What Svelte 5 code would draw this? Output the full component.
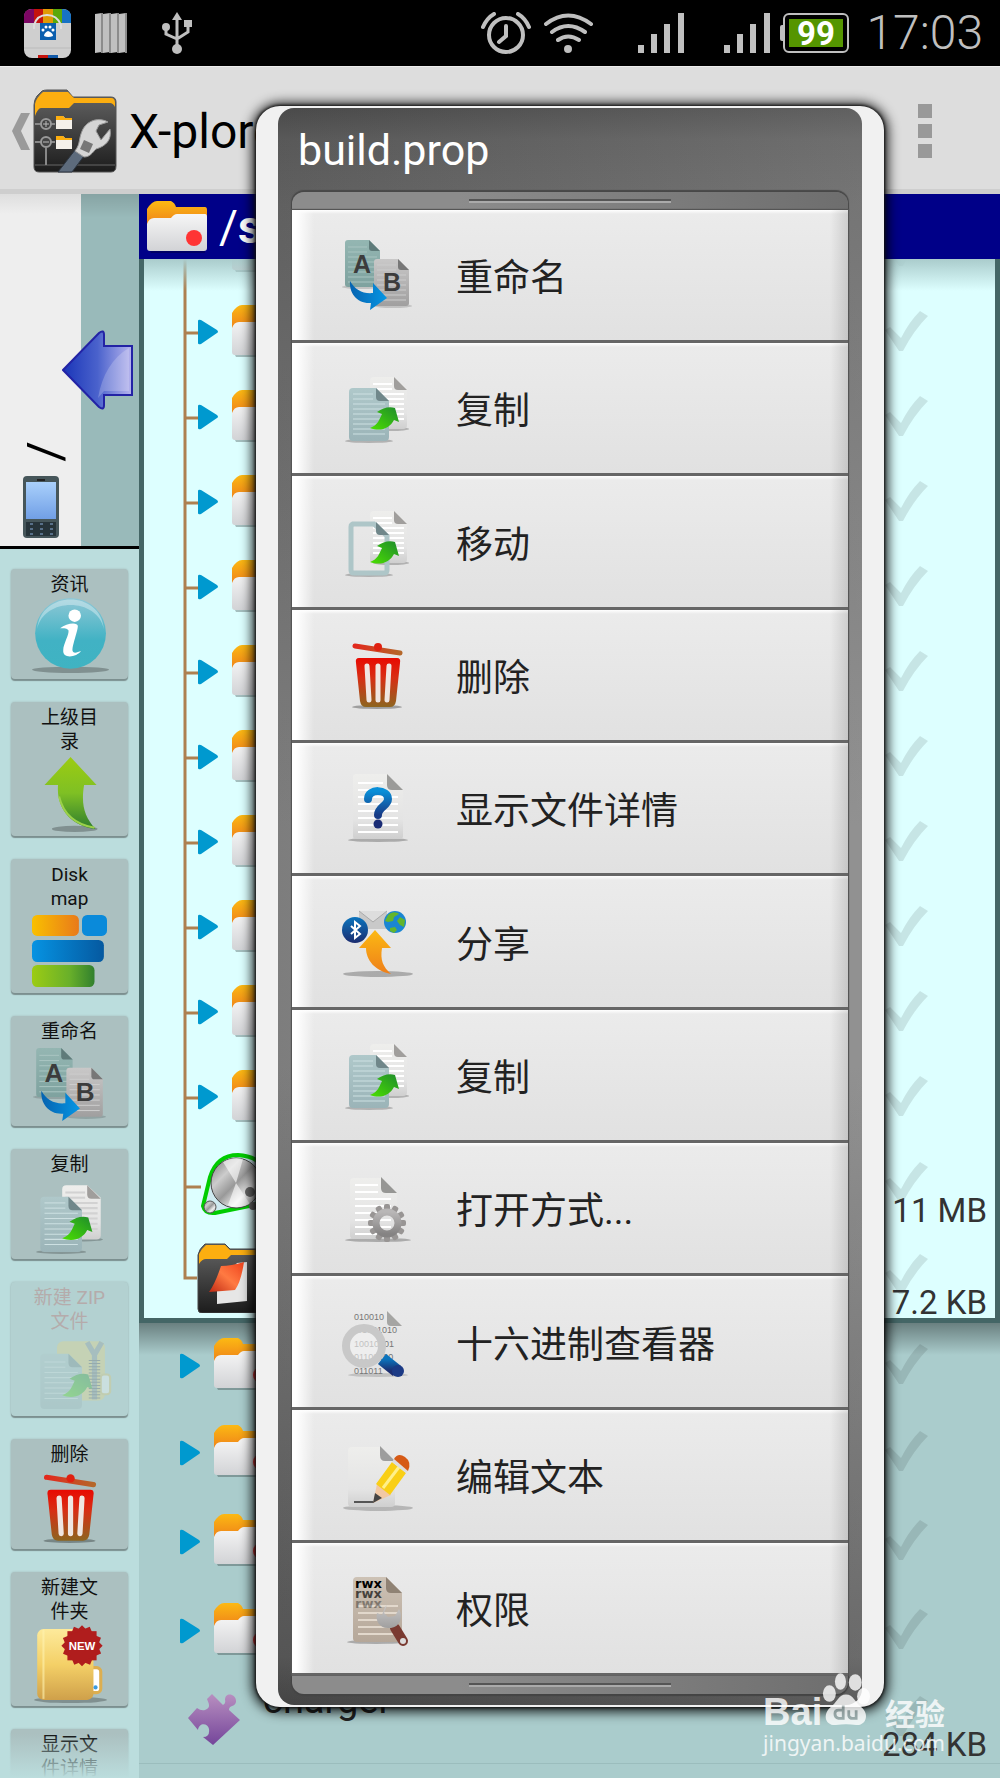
<script lang="ts">
	type Tool = { label: string; icon: string; disabled?: boolean };

	const tools: Tool[] = [
		{ label: '资讯', icon: 'info' },
		{ label: '上级目录', icon: 'up' },
		{ label: 'Disk map', icon: 'diskmap' },
		{ label: '重命名', icon: 'rename' },
		{ label: '复制', icon: 'copyTool' },
		{ label: '新建 ZIP 文件', icon: 'zip', disabled: true },
		{ label: '删除', icon: 'trash' },
		{ label: '新建文件夹', icon: 'newFolder' },
		{ label: '显示文件详情', icon: 'details' }
	];

	const menu = [
		{ label: '重命名', icon: 'rename' },
		{ label: '复制', icon: 'copy' },
		{ label: '移动', icon: 'move' },
		{ label: '删除', icon: 'trash' },
		{ label: '显示文件详情', icon: 'details' },
		{ label: '分享', icon: 'share' },
		{ label: '复制', icon: 'copy' },
		{ label: '打开方式...', icon: 'openWith' },
		{ label: '十六进制查看器', icon: 'hex' },
		{ label: '编辑文本', icon: 'edit' },
		{ label: '权限', icon: 'rights' }
	];

	const folders = Array.from({ length: 11 }, (_, i) => i);
	const otherFolders = [0, 1, 2, 3];
	const docLines = [0, 1, 2, 3, 4, 5, 6, 7];
	const teeth = Array.from({ length: 12 }, (_, i) => i * 30);

	let selected = $state('');
</script>

{#snippet icon(name: string)}
	<svg class="icon" viewBox="0 0 72 72" aria-hidden="true">
		{#if name === 'rename'}
			<ellipse cx="20" cy="48" rx="19" ry="2" fill="#000" opacity=".15" />
			<path d="M7 1h21l11 11v33q0 3-3 3H7q-3 0-3-3V4q0-3 3-3z" fill="url(#teal)" />
			{#each docLines as n}
				<path d="M7 {8 + n * 5}h{n < 2 ? 19 : 29}" stroke="#a8c4c1" />
			{/each}
			<path d="M28 1l11 11h-8q-3 0-3-3z" fill="#5f7b7a" />
			<text x="12" y="34" class="letter">A</text>
			<ellipse cx="52" cy="67" rx="19" ry="2" fill="#000" opacity=".15" />
			<path d="M36 20h21l11 11v33q0 3-3 3H36q-3 0-3-3V23q0-3 3-3z" fill="url(#silver)" />
			{#each docLines as n}
				<path d="M36 {26 + n * 5}h{n < 2 ? 19 : 29}" stroke="#ccc" />
			{/each}
			<path d="M57 20l11 11h-8q-3 0-3-3z" fill="#777" />
			<text x="42" y="52" class="letter">B</text>
			<path d="M9 42c5 9 13 13 23 12v-10l14 15-17 12 1-7C16 65 8 54 9 42z" fill="url(#blueH)" />
		{:else if name === 'copy' || name === 'move' || name === 'copyTool'}
			<ellipse cx="50" cy="57" rx="18" ry="2" fill="#000" opacity=".22" />
			<path d="M33 5h20l13 12v36q0 4-4 4H33q-4 0-4-4V9q0-4 4-4z" fill="url(#paper)" />
			{#each docLines as n}
				<path d="M32 {12 + n * 5}h{n < 2 ? 19 : 31}" stroke={name === 'copyTool' ? '#d2d2d2' : '#fff'} stroke-width="2" />
			{/each}
			<path d="M53 5l13 13h-9q-4 0-4-4z" fill="#a09e9c" />
			<ellipse cx="28" cy="69" rx="24" ry="2" fill="#000" opacity=".22" />
			{#if name === 'move'}
				<path d="M11 18h22l13 12v34q0 3-3 3H13q-3 0-3-3V21q0-3 3-3z" fill="none" stroke="#aec6c8" stroke-width="5" />
			{:else}
				<path d="M12 16h23l13 13v36q0 4-4 4H12q-4 0-4-4V20q0-4 4-4z" fill="url(#pale)" />
				{#each [0, 1, 2, 3, 4, 5, 6, 7, 8] as n}
					<path d="M12 {22 + n * 5}h{n < 2 ? 20 : 32}" stroke="#cde0e2" stroke-width="1" />
				{/each}
			{/if}
			<path d="M35 16l13 13h-9q-4 0-4-4z" fill="#70878a" />
			<path d="M29 56c8-3 9-8 12-14l-5-2c6-4 12-6 18-4l4 14-5-2c-4 8-13 12-24 8z" fill="url(#green)" />
		{:else if name === 'trash'}
			<ellipse cx="36" cy="68" rx="25" ry="2" fill="#000" opacity=".3" />
			<path d="M14 7l45 7" stroke="url(#rust)" stroke-width="5" stroke-linecap="round" />
			<circle cx="37" cy="8" r="4" fill="#e02010" />
			<path d="M18 19h38q4 0 3 5l-4 38q-1 6-6 6H25q-5 0-6-6l-4-38q-1-5 3-5z" fill="url(#red)" />
			<path d="M26 27l2 34M37 27v34M48 27l-2 34" stroke="#efe6e2" stroke-width="5" stroke-linecap="round" />
		{:else if name === 'details'}
			<ellipse cx="37" cy="68" rx="30" ry="2" fill="#000" opacity=".25" />
			<path d="M15 2h31l16 16v46q0 3-3 3H15q-3 0-3-3V5q0-3 3-3z" fill="url(#paper)" />
			{#each docLines as n}
				<path d="M17 {11 + n * 7}h{n < 2 ? 25 : 40}" stroke="#fff" stroke-width="2" />
			{/each}
			<path d="M46 2l16 16H51q-5 0-5-5z" fill="#9b9b99" />
			<path d="M27 27c0-11 20-10 20 0 0 7-10 8-10 16" fill="none" stroke="url(#question)" stroke-width="8" stroke-linecap="round" />
			<circle cx="37" cy="52" r="4.500" fill="#1a2c75" />
		{:else if name === 'share'}
			<ellipse cx="37" cy="68" rx="35" ry="3" fill="#000" opacity=".25" />
			<path d="M18 5h28v18H18z" fill="#c9c9c9" />
			<path d="M18 5l14 11L46 5" fill="#ddd" stroke="#aaa" />
			<circle cx="14" cy="24" r="13" fill="url(#navyV)" />
			<path d="M10 20l9 8-5 4V16l5 4-9 8" fill="none" stroke="#fff" stroke-width="2" />
			<circle cx="54" cy="16" r="11" fill="#1a86d2" />
			<path d="M47 9c4-4 9-3 11-1l-5 3-1 4-5 1-3-1zM59 11l5 3-1 7-4-2-3-4zM49 22l5-1 2 3-3 3-4-2z" fill="#63b52c" />
			<path d="M34 24l16 18h-9c-2 12 1 19 9 26-16-3-25-14-25-26h-7z" fill="url(#orangeV)" />
		{:else if name === 'openWith'}
			<ellipse cx="37" cy="68" rx="33" ry="2" fill="#000" opacity=".25" />
			<path d="M13 6h28l15 15v46H13q-4 0-4-4V10q0-4 4-4z" fill="url(#paper)" />
			{#each docLines as n}
				<path d="M14 {13 + n * 7}h{n < 2 ? 23 : 36}" stroke="#fff" stroke-width="2" />
			{/each}
			<path d="M40 5l16 16H45q-5 0-5-5z" fill="#969694" />
			{#each teeth as a}
				<rect x="43" y="32" width="6" height="9" rx="2" fill="#989594" transform="rotate({a} 46 51)" />
			{/each}
			<circle cx="46" cy="51" r="11" fill="none" stroke="url(#grey)" stroke-width="7" />
		{:else if name === 'hex'}
			<ellipse cx="37" cy="69" rx="30" ry="2" fill="#000" opacity=".15" />
			<path d="M46 5l15 15H50q-4 0-4-4z" fill="#a5a5a3" />
			<text x="13" y="14" class="bits">010010</text>
			<text x="16" y="27" class="bits">01001010</text>
			<text x="13" y="41" class="bits">10010101</text>
			<text x="13" y="54" class="bits">01100100</text>
			<text x="13" y="68" class="bits">011011</text>
			<circle cx="23" cy="40" r="18" fill="#f4f4f4" fill-opacity=".6" stroke="#c8c8c8" stroke-width="8" />
			<path d="M41 53l15 12" stroke="url(#navyV)" stroke-width="13" />
			<circle cx="57" cy="65" r="6" fill="#1c3a85" />
		{:else if name === 'edit'}
			<ellipse cx="37" cy="69" rx="35" ry="3" fill="#000" opacity=".2" />
			<path d="M11 8h28l15 14v42q0 4-4 4H11q-4 0-4-4V12q0-4 4-4z" fill="url(#paper)" />
			<path d="M39 7l15 15H44q-5 0-5-6z" fill="#9d9d9d" />
			<path d="M13 63h20" stroke="#555" stroke-width="2" />
			<path d="M32 64l4-19 14 11z" fill="#f2c8a4" />
			<path d="M32 64l2-10 7 5z" fill="#444" />
			<path d="M35 45l16-22 14 11-16 22z" fill="#f9cf16" />
			<path d="M42 49l16-21" stroke="#fff08a" stroke-width="3" />
			<path d="M51 23l14 11 2-2-14-12z" fill="#ddd" />
			<path d="M53 20q4-7 11-2t3 14z" fill="#d65a16" />
		{:else if name === 'rights'}
			<ellipse cx="35" cy="70" rx="29" ry="2" fill="#000" opacity=".25" />
			<path d="M16 5h29l16 16v46q0 3-3 3H16q-4 0-4-4V9q0-4 4-4z" fill="url(#brown)" />
			<path d="M17 34h40M17 41h40M17 48h40M17 55h40M17 62h40" stroke="#e2d8cc" stroke-width="2" />
			<path d="M45 5l16 16H50q-5 0-5-5z" fill="#8f8274" />
			<text x="14" y="16" class="rwx">rwx</text>
			<text x="14" y="26" class="rwx" opacity=".65">rwx</text>
			<text x="14" y="36" class="rwx" opacity=".35">rwx</text>
			<path d="M54 56l8 13" stroke="#7a3a31" stroke-width="10" stroke-linecap="round" />
			<circle cx="62" cy="69" r="3" fill="#ddd" />
			<path d="M46 33l-3 8 4 4 7-1 4-7c5 9 0 20-11 19-9 0-13-8-11-15l5 2 3-8z" fill="url(#silver)" />
		{:else if name === 'info'}
			<ellipse cx="37" cy="67" rx="37" ry="3" fill="#000" opacity=".25" />
			<circle cx="37" cy="32" r="34" fill="url(#aqua)" />
			<path d="M5 28C8-10 66-10 69 28 63-3 11-3 5 28z" fill="#fff" opacity=".35" />
			<circle cx="41" cy="15" r="6" fill="#fff" />
			<path d="M27 27c6-5 17-6 17-2 0 5-6 20-5 24 1 3 5 1 8 0-4 6-18 8-17-1 0-6 6-15 5-19-1-2-4-2-8-2z" fill="#fff" />
		{:else if name === 'up'}
			<ellipse cx="41" cy="69" rx="22" ry="3" fill="#000" opacity=".25" />
			<path d="M37 0l25 27H50c-3 18 0 30 11 42C38 67 23 49 25 27H12z" fill="url(#lime)" />
			<path d="M26 38c4 17 16 27 34 30" fill="none" stroke="#9bd14a" stroke-width="2" />
		{:else if name === 'diskmap'}
			<rect x="0" y="1" width="45" height="20" rx="5" fill="url(#orangeH)" />
			<rect x="48" y="1" width="24" height="20" rx="5" fill="#0a8ada" />
			<rect x="0" y="25" width="69" height="21" rx="5" fill="url(#blueH2)" />
			<rect x="0" y="49" width="60" height="21" rx="5" fill="url(#greenH)" />
		{:else if name === 'zip'}
			<rect x="24" y="4" width="46" height="57" rx="6" fill="#efd777" />
			<rect x="66" y="36" width="9" height="19" rx="3" fill="#fff" stroke="#e2c468" stroke-width="2" />
			<path d="M53 5l7 12 7-12M60 17v43" fill="none" stroke="#8b9498" stroke-width="5" />
			<path d="M60 22v38" stroke="#555" stroke-width="11" stroke-dasharray="1 2" />
			<path d="M12 16h23l13 13v36q0 4-4 4H12q-4 0-4-4V20q0-4 4-4z" fill="url(#pale)" />
			{#each docLines as n}
				<path d="M12 {24 + n * 5}h{n < 2 ? 20 : 32}" stroke="#d7e6e7" />
			{/each}
			<path d="M35 16l13 13h-9q-4 0-4-4z" fill="#70878a" />
			<path d="M29 56c8-3 9-8 12-14l-5-2c6-4 12-6 18-4l4 14-5-2c-4 8-13 12-24 8z" fill="url(#green)" />
		{:else if name === 'newFolder'}
			<ellipse cx="37" cy="70" rx="35" ry="3" fill="#000" opacity=".25" />
			<rect x="55" y="39" width="11" height="24" rx="4" fill="#fff" stroke="#dcae50" stroke-width="3" />
			<rect x="5" y="2" width="54" height="68" rx="6" fill="url(#sand)" />
			<path d="M11 3v66" stroke="#fff3b0" stroke-width="2" opacity=".6" />
			<g fill="#b01d1d">
				{#each [0, 22, 45, 67] as a}
					<rect x="34" y="4" width="28" height="28" transform="rotate({a} 48 18)" />
				{/each}
			</g>
			<text x="48" y="22" text-anchor="middle" class="new">NEW</text>
			<circle cx="61" cy="58" r="2" fill="#3b9be0" />
		{/if}
	</svg>
{/snippet}

{#snippet folder(dot: boolean)}
	<svg class="folder" viewBox="0 0 60 52" aria-hidden="true">
		<path d="M2 48h56v4H4z" fill="#000" opacity=".25" />
		<path d="M0 22V8q5-8 10-8h14q4 2 5 6h29q2 0 2 3v16H0z" fill="url(#orangeV)" />
		<path d="M0 23q2-6 7-6h17q3-4 6-4h28q2 0 2 3v31q0 3-3 3H3q-3 0-3-3z" fill="url(#white)" />
		{#if dot}
			<circle cx="47" cy="37" r="8" fill="#ff3434" />
		{/if}
	</svg>
{/snippet}

{#snippet check()}
	<svg class="check" width="44" height="42" viewBox="0 0 44 42" aria-hidden="true">
		<path d="M0 20L5 17 16 28Q24 12 35 1L43 6Q29 20 18 41L14 41Z" fill="#000" opacity=".1" />
	</svg>
{/snippet}

{#snippet signal()}
	<svg width="76" height="40" viewBox="0 0 76 40" fill="#bfbfbf" aria-hidden="true">
		<path d="M30 32h6v8h-6zM43 21h6v19h-6zM56 11h6v29h-6zM70 0h6v40h-6z" />
	</svg>
{/snippet}

<svg class="defs" width="0" height="0" aria-hidden="true">
	<defs>
		<linearGradient id="teal" x2="0" y2="1"><stop stop-color="#94b6b2" /><stop offset="1" stop-color="#7ea29f" /></linearGradient>
		<linearGradient id="grey" x2="0" y2="1"><stop stop-color="#b9b7b7" /><stop offset="1" stop-color="#858383" /></linearGradient>
		<linearGradient id="silver" x2="0" y2="1"><stop stop-color="#c9c8c8" /><stop offset="1" stop-color="#a09f9f" /></linearGradient>
		<linearGradient id="paper" x2="0" y2="1"><stop stop-color="#eeeeec" /><stop offset=".7" stop-color="#e4e4e4" /><stop offset="1" stop-color="#cfcfcf" /></linearGradient>
		<linearGradient id="pale" x2="0" y2="1"><stop stop-color="#afc8ca" /><stop offset="1" stop-color="#9bb4b8" /></linearGradient>
		<linearGradient id="brown" x2="0" y2="1"><stop stop-color="#cdc2b5" /><stop offset="1" stop-color="#b5a799" /></linearGradient>
		<linearGradient id="green" x1="1" x2="0" y2="1"><stop stop-color="#1e8b2c" /><stop offset="1" stop-color="#4be000" /></linearGradient>
		<linearGradient id="lime" x2="0" y2="1"><stop stop-color="#9ccc12" /><stop offset=".5" stop-color="#7fc024" /><stop offset="1" stop-color="#2e7d2e" /></linearGradient>
		<linearGradient id="red" x2="0" y2="1"><stop stop-color="#e80a02" /><stop offset=".4" stop-color="#d82e14" /><stop offset="1" stop-color="#8d651f" /></linearGradient>
		<linearGradient id="rust"><stop stop-color="#e2281c" /><stop offset="1" stop-color="#b5672a" /></linearGradient>
		<linearGradient id="question" x2="0" y2="1"><stop stop-color="#0a8fd8" /><stop offset="1" stop-color="#173a86" /></linearGradient>
		<linearGradient id="navyV" x2="0" y2="1"><stop stop-color="#0b74bd" /><stop offset="1" stop-color="#1c2d70" /></linearGradient>
		<linearGradient id="blueH"><stop stop-color="#0663b0" /><stop offset="1" stop-color="#0696e4" /></linearGradient>
		<linearGradient id="blueH2"><stop stop-color="#0693e2" /><stop offset="1" stop-color="#0559a0" /></linearGradient>
		<linearGradient id="orangeH"><stop stop-color="#f9c000" /><stop offset="1" stop-color="#e97a1a" /></linearGradient>
		<linearGradient id="greenH"><stop stop-color="#9ccc14" /><stop offset=".6" stop-color="#69b02a" /><stop offset="1" stop-color="#31802e" /></linearGradient>
		<linearGradient id="orangeV" x2="0" y2="1"><stop stop-color="#fcb913" /><stop offset="1" stop-color="#ee7f1a" /></linearGradient>
		<linearGradient id="white" x2="0" y2="1"><stop stop-color="#f6f6f6" /><stop offset="1" stop-color="#d2d3d6" /></linearGradient>
		<linearGradient id="aqua" x2="0" y2="1"><stop stop-color="#90c8d6" /><stop offset=".6" stop-color="#41b2c4" /><stop offset="1" stop-color="#3fb3c2" /></linearGradient>
		<linearGradient id="sand" x2="0" y2="1"><stop stop-color="#fdea9b" /><stop offset=".5" stop-color="#f4d067" /><stop offset="1" stop-color="#cfa04a" /></linearGradient>
		<linearGradient id="dark" x2="0" y2="1"><stop stop-color="#666" /><stop offset="1" stop-color="#1c1c1c" /></linearGradient>
		<linearGradient id="arrow"><stop stop-color="#1a35b8" /><stop offset=".5" stop-color="#4a62cc" /><stop offset="1" stop-color="#b7b5ee" /></linearGradient>
		<linearGradient id="purple" x2="0" y2="1"><stop stop-color="#b88fc0" /><stop offset="1" stop-color="#74459a" /></linearGradient>
		<linearGradient id="metal" x2="1" y2="1"><stop stop-color="#777" /><stop offset=".3" stop-color="#ccc" /><stop offset=".5" stop-color="#999" /><stop offset=".7" stop-color="#eee" /><stop offset="1" stop-color="#777" /></linearGradient>
		<linearGradient id="page" x1="1" x2="0" y2="1"><stop stop-color="#f0421c" /><stop offset=".5" stop-color="#ff7a42" /><stop offset="1" stop-color="#c02a14" /></linearGradient>
		<linearGradient id="screen" x2="0" y2="1"><stop stop-color="#a9d0fb" /><stop offset="1" stop-color="#719fe6" /></linearGradient>
	</defs>
</svg>

<div class="app">
	<div class="status">
		<div class="group left">
			<svg width="47" height="49" viewBox="0 0 47 49" aria-label="Baidu">
				<rect width="47" height="49" rx="8" fill="#cfcfcf" />
				<path d="M8 0h3v14H0V8q0-8 8-8z" fill="#7c0663" />
				<path d="M10 0h9v14h-9z" fill="#c4130d" />
				<path d="M19 0h10v14H19z" fill="#e19a05" />
				<path d="M29 0h9v14h-9z" fill="#5aa80a" />
				<path d="M38 0q9 0 9 8v6h-9z" fill="#1772c4" />
				<path d="M10 20v-4q3-10 13-10t14 10v4" fill="none" stroke="#ddd" stroke-width="2" />
				<rect x="16" y="14" width="16" height="17" fill="#0c5fae" />
				<path d="M20 27q0-3 4-5 5 2 5 5-5 2-9 0z" fill="#fff" />
				<circle cx="19" cy="21" r="1.500" fill="#fff" /><circle cx="22" cy="18" r="1.500" fill="#fff" />
				<circle cx="26" cy="18" r="1.500" fill="#fff" /><circle cx="29" cy="21" r="1.500" fill="#fff" />
				<path d="M0 39h47" stroke="#bbb" />
				<path d="M14 46h10v3H14z" fill="#c4130d" /><path d="M24 46h10v3H24z" fill="#1159a8" />
			</svg>
			<svg width="33" height="40" viewBox="0 0 33 40" aria-hidden="true">
				<path d="M0 1l7-1v39l-7 1zM8 1l7-1v39l-7 1zM16 1l7-1v39l-7 1zM24 1l7-1v39l-7 1z" fill="#c0c0c0" />
				<path d="M7 0v40M15 0v40M23 0v40M31 0v40" stroke="#8c8c8c" stroke-width="2" />
			</svg>
			<svg width="52" height="42" viewBox="0 0 52 42" fill="#bfbfbf" aria-hidden="true">
				<path d="M25 0l5 8h-10zM32 8h8v7h-8z" /><circle cx="14" cy="15" r="4" /><circle cx="25" cy="37" r="5" />
				<path d="M25 6v30M14 16v6l11 5M36 14v6l-11 7" fill="none" stroke="#bfbfbf" stroke-width="3" />
			</svg>
		</div>
		<div class="group right">
			<svg width="53" height="42" viewBox="0 0 53 42" fill="none" stroke="#bfbfbf" stroke-width="4" stroke-linecap="round" aria-hidden="true">
				<circle cx="25" cy="23" r="17" /><path d="M25 14v10l-7 6M2 15Q6 6 13 2M48 15Q44 6 37 2" />
			</svg>
			<svg width="54" height="40" viewBox="0 0 54 40" fill="none" stroke="#bfbfbf" stroke-width="4" stroke-linecap="round" aria-hidden="true">
				<path d="M2 11q22-17 45 0M8 19q16-12 33 0M14 27q10-7 21 0" /><circle cx="24" cy="36" r="2" />
			</svg>
			{@render signal()}
			{@render signal()}
			<div class="battery"><span>99</span></div>
			<time>17:03</time>
		</div>
	</div>

	<header>
		<button class="home" aria-label="Back">
			<svg width="19" height="37" viewBox="0 0 19 37"><path d="M9 0h9L9 18l9 19H9L0 18z" fill="#9a9a9a" /></svg>
			<svg width="84" height="84" viewBox="0 0 84 84">
				<path d="M1 16q0-5 3-9l5-5q2-1 5-1h20l6 7h38q5 0 5 5v64q0 6-5 6H6q-5 0-5-5z" fill="url(#dark)" stroke="#555" />
				<path d="M2 27V15q1-6 8-12h25l6 6h37q4 0 4 5v4q-2-4-5-4H41l-5 5H8q-3 0-6 8z" fill="#fcae10" />
				<path d="M2 76h80" stroke="#666" />
				<path d="M2 35h20M2 53h20M13 59v17" stroke="#888" stroke-width="2" />
				<circle cx="13" cy="35" r="5" fill="#444" stroke="#999" stroke-width="2" /><circle cx="13" cy="53" r="5" fill="#444" stroke="#999" stroke-width="2" />
				<path d="M10 35h6M13 32v6M10 53h6" stroke="#bbb" />
				<path d="M23 27h7l2 2h7v11H23zM23 47h7l2 2h7v11H23z" fill="#f5f1ea" />
				<path d="M23 27h7l2 2h7v2H23zM23 47h7l2 2h7v2H23z" fill="#fcae10" />
				<path d="M25 83l17-22 9 6-12 16z" fill="#5d6b7c" stroke="#2c3540" />
				<path d="M42 62c6-8 3-12 8-22 5-9 16-12 25-7l-9 3-3 6 5 9 9-11c2 11-4 17-14 20-4 4-6 8-12 8z" fill="#d5d5d5" stroke="#999" />
				<path d="M51 51l9 4-4 9-9-4z" fill="#777" />
			</svg>
			<span class="title">X-plore</span>
		</button>
		<button class="overflow" aria-label="More options"><i></i><i></i><i></i></button>
	</header>

	<main>
		<aside>
			<div class="tabs">
				<div class="tab">
					<span class="root">/</span>
					<svg width="36" height="62" viewBox="0 0 36 62" aria-hidden="true">
						<rect width="36" height="62" rx="4" fill="#46565a" />
						<rect x="3" y="6" width="30" height="37" fill="url(#screen)" />
						<path d="M14 4h8" stroke="#222" stroke-width="2" />
						<path d="M3 46h30v14H3z" fill="#27343a" />
						<path d="M7 48h3M17 48h3M27 48h3M7 53h3M17 53h3M27 53h3M7 58h3M17 58h3M27 58h3" stroke="#587089" stroke-width="2" />
					</svg>
				</div>
				<button class="switch" aria-label="Switch pane">
					<svg width="71" height="80" viewBox="0 0 71 80">
						<path d="M1 40L37 3q5-4 5 2v11h28v49H42v10q0 6-5 2z" fill="url(#arrow)" stroke="#2323a5" stroke-width="2" />
						<path d="M67 18v43H42l-6 7C40 45 50 28 67 18z" fill="#fff" opacity=".2" />
					</svg>
				</button>
			</div>
			<nav>
				{#each tools as tool}
					<button class="tool" disabled={tool.disabled}>
						<span>{tool.label}</span>
						{@render icon(tool.icon)}
					</button>
				{/each}
			</nav>
		</aside>

		<section>
			<div class="path">{@render folder(true)}<span>/<b>system</b></span></div>
			<ul class="tree">
				{#each folders as n (n)}
					<li>
						<svg class="branch" width="74" height="85" viewBox="0 0 74 85" aria-hidden="true">
							<path d="M41 0v85M41 43h14" stroke="#ad8050" stroke-width="3" fill="none" />
							<path d="M54 31q0-2 3-1l16 10q2 2 0 3L57 54q-3 1-3-1z" fill="#0099cf" />
						</svg>
						{@render folder(false)}
						{@render check()}
					</li>
				{/each}
				<li class="big">
					<svg class="branch" width="57" height="92" viewBox="0 0 57 92" aria-hidden="true">
						<path d="M41 0v92M41 47h18" stroke="#ad8050" stroke-width="3" fill="none" />
					</svg>
					<svg class="pic" width="70" height="66" viewBox="0 0 70 66" aria-hidden="true">
						<path d="M2 53L9 24Q16 2 37 2q30 2 30 30-2 16-14 20L14 60q-10 1-12-7z" fill="#bcd" fill-opacity=".4" stroke="#0c0" stroke-width="4" />
						<circle cx="35" cy="30" r="25" fill="url(#metal)" stroke="#444" />
						<path d="M35 30L22 9q10-6 20-3zM35 30l14 21q-12 6-22 1z" fill="#fff" opacity=".6" />
						<circle cx="9" cy="54" r="6" fill="url(#metal)" stroke="#555" />
						<circle cx="49" cy="39" r="5" fill="#666" />
						<circle cx="52" cy="53" r="4" fill="#666" />
					</svg>
					<div class="meta">{@render check()}<span>11 MB</span></div>
				</li>
				<li class="big">
					<svg class="branch" width="53" height="92" viewBox="0 0 53 92" aria-hidden="true">
						<path d="M41 0v46h18" stroke="#ad8050" stroke-width="3" fill="none" />
					</svg>
					<svg class="pic" width="70" height="70" viewBox="0 0 70 70" aria-hidden="true">
						<path d="M1 12q1-6 7-11h20l5 5h37v64H5q-4 0-4-4z" fill="url(#dark)" stroke="#444" />
						<path d="M2 21V11q2-5 7-9h19l5 5h37v5H34l-4 4H9q-4 0-7 5z" fill="#fcae10" />
						<path d="M20 45l20-25 10-1v39l-30 3z" fill="#e6e6e6" />
						<path d="M12 49q6-8 12-26 10 0 23-4-3 20-9 28-12 1-26 2z" fill="url(#page)" />
					</svg>
					<div class="meta">{@render check()}<span>7.2 KB</span></div>
				</li>
			</ul>
			<ul class="rest">
				{#each otherFolders as n (n)}
					<li>
						<svg width="20" height="26" viewBox="0 0 20 26" aria-hidden="true">
							<path d="M0 2q0-2 3-1l16 10q2 2 0 3L3 25q-3 1-3-1z" fill="#0099cf" />
						</svg>
						{@render folder(true)}
						{@render check()}
					</li>
				{/each}
				<li class="file">
					<svg class="pic" width="61" height="52" viewBox="0 0 61 52" aria-hidden="true">
						<path d="M24 1l11 11q3-2 2-5c0-9 12-6 11 2-1 5-7 3-7 8l11 10-27 25-10-8q7 0 6-8c-1-6-10-7-11 1L0 25l9-10q4 3 8 2c7-2 3-8 2-11z" fill="url(#purple)" />
					</svg>
					<span class="name">charger</span>
					<div class="meta">{@render check()}<span>284 KB</span></div>
				</li>
			</ul>
		</section>
	</main>

	<div class="dialog" role="dialog" aria-label="build.prop">
		<div class="frame">
			<h1>build.prop</h1>
			<div class="strip top"></div>
			<div class="menu">
				{#each menu as item}
					<button onclick={() => (selected = item.label)}>
						{@render icon(item.icon)}
						<span>{item.label}</span>
					</button>
				{/each}
			</div>
			<div class="strip bottom"></div>
		</div>
	</div>

	<div class="watermark">
		<div class="brand">
			<b>Bai</b>
			<svg width="48" height="58" viewBox="0 0 52 58" aria-label="du">
				<g fill="#fff">
					<ellipse cx="8" cy="22" rx="7" ry="9" /><ellipse cx="20" cy="9" rx="6" ry="9" />
					<ellipse cx="36" cy="10" rx="7" ry="9" /><ellipse cx="45" cy="25" rx="7" ry="9" />
					<path d="M26 23c8 0 10 9 17 14 9 8 4 20-6 19-8-1-14-1-22 0C4 57 0 45 9 37c7-5 9-14 17-14z" />
				</g>
				<path d="M23 35v14h-5q-4-1-4-5t4-4h5M29 40v6q1 3 4 3h4v-9" fill="none" stroke="#98a6a6" stroke-width="3" />
			</svg>
			<b class="cn">经验</b>
		</div>
		<span>jingyan.baidu.com</span>
	</div>
</div>

<style>
	:global(body) {
		margin: 0;
	}

	.app {
		position: relative;
		display: flex;
		flex-direction: column;
		height: 100vh;
		overflow: hidden;
		background: #aacccc;
		font-family: Roboto, "Noto Sans CJK SC", sans-serif;
		color: #222;
	}

	.defs {
		position: absolute;
	}

	svg {
		display: block;
		flex: none;
	}

	button {
		font-family: inherit;
		color: inherit;
		border: 0;
		padding: 0;
		margin: 0;
		background: none;
		cursor: pointer;
	}

	ul {
		list-style: none;
		margin: 0;
		padding: 0;
	}

	.status {
		display: flex;
		flex: none;
		justify-content: space-between;
		height: 66px;
		padding: 0 17px 0 24px;
		background: #000;
	}

	.group {
		display: flex;
		align-items: center;
	}

	.left {
		gap: 24px;
	}

	.right {
		gap: 10px;
	}

	.battery {
		position: relative;
		box-sizing: border-box;
		width: 66px;
		height: 40px;
		margin-left: 3px;
		padding: 4px;
		border: 2px solid #bfbfbf;
		border-radius: 6px;
	}

	.battery::before {
		content: "";
		position: absolute;
		left: -5px;
		top: 10px;
		width: 4px;
		height: 16px;
		background: #bfbfbf;
		border-radius: 2px 0 0 2px;
	}

	.battery span {
		display: block;
		height: 28px;
		background: #559500;
		color: #fff;
		font: bold 33px/30px Roboto, sans-serif;
		text-align: center;
	}

	time {
		min-width: 124px;
		color: #bfbfbf;
		font-size: 48px;
		font-weight: 300;
		line-height: 68px;
		text-align: right;
	}

	header {
		display: flex;
		flex: none;
		justify-content: space-between;
		align-items: center;
		box-sizing: border-box;
		height: 128px;
		padding: 6px 68px 0 12px;
		background: #ddd;
		border-top: 1px solid #eee;
		border-bottom: 5px solid #cecece;
	}

	.home {
		display: flex;
		align-items: center;
		gap: 2px;
	}

	.title {
		margin-left: 10px;
		color: #000;
		font-size: 48px;
	}

	.overflow {
		display: grid;
		gap: 6px;
	}

	.overflow i {
		width: 14px;
		height: 14px;
		background: #999;
	}

	main {
		display: flex;
		flex: 1;
		min-height: 0;
	}

	aside {
		position: relative;
		display: flex;
		flex-direction: column;
		flex: none;
		width: 139px;
		background: #bbdddd;
		overflow: hidden;
	}

	aside::after {
		content: "";
		position: absolute;
		inset: auto 0 0;
		height: 44px;
		background: linear-gradient(rgba(187, 221, 221, 0), #bbdddd);
	}

	.tabs {
		position: relative;
		flex: none;
		height: 352px;
		background: linear-gradient(rgba(0, 0, 0, 0.12), transparent 24px), #99baba;
		border-bottom: 3px solid #000;
	}

	.tab {
		display: flex;
		flex-direction: column;
		align-items: center;
		justify-content: flex-end;
		gap: 14px;
		box-sizing: border-box;
		width: 81px;
		height: 100%;
		padding-bottom: 8px;
		background: linear-gradient(#dedede, #eee 20px);
	}

	.root {
		padding-right: 10px;
		color: #000;
		font-size: 50px;
		line-height: 48px;
		writing-mode: vertical-rl;
		transform: rotate(180deg);
	}

	.switch {
		position: absolute;
		right: 6px;
		top: 136px;
	}

	nav {
		display: flex;
		flex-direction: column;
		gap: 23px;
		padding: 20px 11px;
	}

	.tool {
		display: flex;
		flex: none;
		flex-direction: column;
		align-items: center;
		gap: 3px;
		box-sizing: border-box;
		padding: 4px 28px;
		background: #abc0c0;
		border-radius: 4px;
		box-shadow: 0 2px 1px #7c8f8f, 0 0 2px #9fb3b3;
		color: #111;
		font-size: 19px;
		line-height: 24px;
		text-align: center;
	}

	.tool .icon {
		width: 75px;
		height: 75px;
	}

	.tool:disabled {
		padding: 4px 20px;
		background: #b3d1d1;
		color: #b5abab;
	}

	.tool:disabled .icon {
		opacity: 0.3;
	}

	.icon {
		width: 72px;
		height: 72px;
		overflow: visible;
	}

	.icon text {
		font-family: "Liberation Sans", sans-serif;
	}

	.icon .letter {
		font-size: 25px;
		font-weight: bold;
		fill: #3c3c3c;
	}

	.icon .bits {
		font-size: 9px;
		fill: #777;
	}

	.icon .rwx {
		font-family: "DejaVu Sans", sans-serif;
		font-size: 13px;
		font-weight: bold;
	}

	.icon .new {
		font-size: 11px;
		font-weight: bold;
		fill: #fff;
	}

	section {
		display: flex;
		flex: 1;
		flex-direction: column;
		min-width: 0;
	}

	.path {
		display: flex;
		flex: none;
		align-items: center;
		gap: 12px;
		height: 65px;
		padding-left: 8px;
		background: #000088;
		color: #fff;
		font-size: 46px;
	}

	.folder {
		width: 60px;
		height: 52px;
	}

	.tree {
		position: relative;
		flex: none;
		box-sizing: border-box;
		height: 1064px;
		border: solid #446666;
		border-width: 0 5px 5px;
		background: #ddffff;
		overflow: hidden;
	}

	/* fade under the path bar, over the side borders too */
	.tree::after {
		content: "";
		position: absolute;
		inset: 0 -5px auto;
		height: 32px;
		background: linear-gradient(#aacccc, rgba(170, 204, 204, 0));
	}

	.tree li:first-child {
		margin-top: -54px;
	}

	li {
		display: flex;
		align-items: center;
		gap: 14px;
		height: 85px;
	}

	.check {
		margin-left: auto;
	}

	.tree .check {
		margin-right: 66px;
	}

	li .folder,
	li > .check {
		margin-bottom: 4px;
	}

	.big {
		gap: 0;
		height: 92px;
	}

	.meta {
		display: flex;
		flex-direction: column;
		align-self: flex-start;
		align-items: flex-end;
		margin-left: auto;
		padding: 21px 8px 0 0;
		color: #333;
		font-size: 33px;
		line-height: 16px;
	}

	.tree .meta .check {
		margin-right: 58px;
	}

	.rest {
		flex: 1;
		background: linear-gradient(#6a8080, rgba(106, 128, 128, 0) 32px), #aacccc;
	}

	.rest li {
		padding-left: 41px;
	}

	.rest li + li {
		height: 89px;
	}

	.rest .check {
		margin-right: 71px;
	}

	.rest .file {
		box-sizing: border-box;
		padding-left: 49px;
		border-bottom: 1px solid #9bbdbd;
	}

	.name {
		align-self: flex-start;
		font-size: 38px;
		line-height: 50px;
	}

	.rest .meta {
		padding: 20px 13px 0 0;
	}

	.rest .meta .check {
		margin-right: 58px;
	}

	.dialog {
		position: absolute;
		top: 106px;
		left: 256px;
		right: 116px;
		padding: 2px 22px;
		background: #f1f1f1;
		border-radius: 24px;
		box-shadow: 0 0 3px 1px #111, 0 1px 12px 4px rgba(0, 0, 0, 0.85);
	}

	.frame {
		padding: 0 14px 11px;
		background: linear-gradient(90deg, rgba(0, 0, 0, 0.06), rgba(255, 255, 255, 0.1)), linear-gradient(#4e4e4e, #5e5e5e 2%, #666 6%, #858585 45%, #858585 60%, #5a5a5a 97%, #484848);
		border-radius: 16px;
	}

	h1 {
		margin: 0;
		padding: 0 6px;
		color: #fff;
		font-size: 43px;
		font-weight: normal;
		line-height: 84px;
	}

	.strip {
		display: flex;
		justify-content: center;
		align-items: center;
		height: 18px;
		background: linear-gradient(90deg, #8c8c8c 30%, #6e6e6e);
	}

	.strip::before {
		content: "";
		width: 202px;
		height: 2px;
		border-top: 2px solid #555;
		background: #aaa;
	}

	.top {
		border-radius: 12px 12px 0 0;
		box-shadow: 0 -1px 1px 1px #484848;
	}

	.bottom {
		border-radius: 0 0 12px 12px;
		box-shadow: 0 1px 1px 1px #444;
	}

	.menu {
		box-shadow: 0 0 1px 1px #555;
	}

	.menu button {
		display: flex;
		align-items: center;
		gap: 43px;
		box-sizing: border-box;
		width: 100%;
		height: 133px;
		padding-left: 49px;
		background: linear-gradient(90deg, #fff 4px, rgba(255, 255, 255, 0) 22px), linear-gradient(270deg, rgba(0, 0, 0, 0.12), transparent 18px), linear-gradient(#fff, #ebebeb 4px, #e1e1e1);
		border-bottom: 3px solid #666;
		font-size: 37px;
	}

	.menu button:nth-child(3n) {
		height: 134px;
	}

	.watermark {
		position: absolute;
		right: 55px;
		bottom: 21px;
		color: #fff;
		font: 21px/28px "Noto Sans", sans-serif;
		opacity: 0.8;
		pointer-events: none;
	}

	.brand {
		display: flex;
		align-items: flex-end;
		font-family: "Liberation Sans", sans-serif;
		font-size: 38px;
		line-height: 34px;
	}

	.cn {
		margin-left: auto;
		font-family: "Noto Sans CJK SC", sans-serif;
		font-size: 30px;
	}
</style>
